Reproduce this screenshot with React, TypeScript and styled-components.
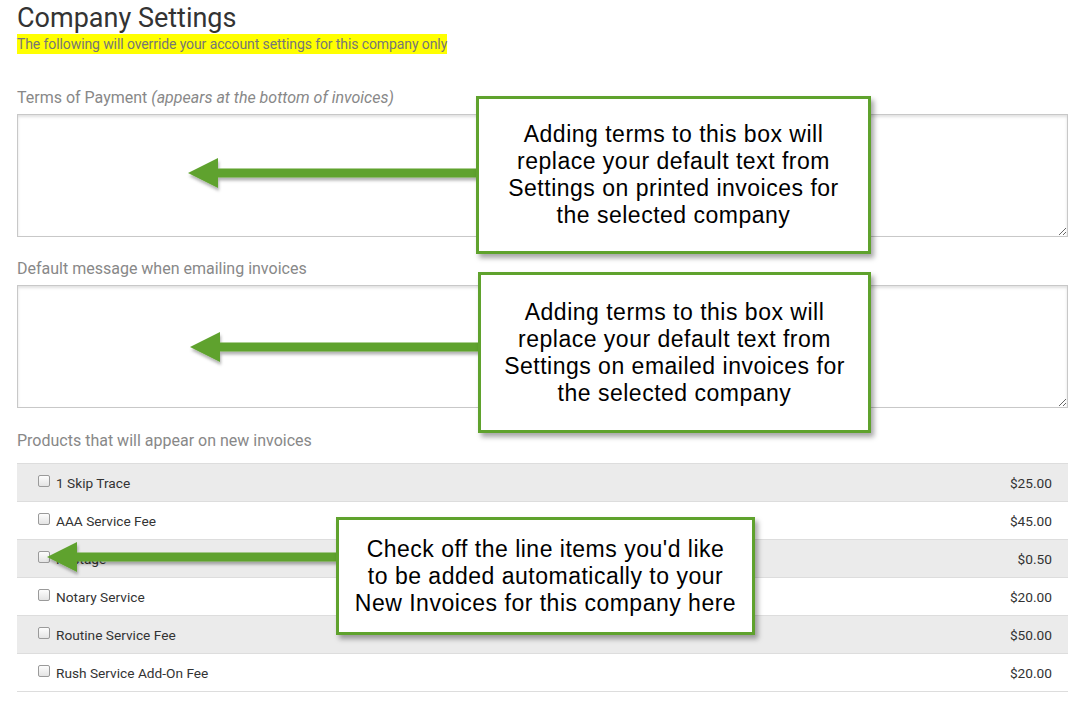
import React from 'react';
import styled, { createGlobalStyle } from 'styled-components';

const GlobalStyle = createGlobalStyle`
  html, body {
    margin: 0;
    padding: 0;
    background: #fff;
  }
  body {
    font-family: Roboto, "Liberation Sans", Arial, sans-serif;
  }
`;

const Page = styled.div`
  position: relative;
  width: 1087px;
  height: 708px;
  overflow: hidden;
  box-sizing: border-box;
  padding: 2px 19px 0 17px;
`;

const Title = styled.h1`
  margin: 0;
  font-size: 27px;
  line-height: 32px;
  font-weight: 400;
  color: #333;
`;

const Highlight = styled.span`
  display: inline-block;
  margin-top: -1px;
  background: #ffff00;
  color: #777;
  font-size: 14px;
  line-height: 20px;
  letter-spacing: -0.1px;
`;

const Field = styled.div<{ $top: number }>`
  margin-top: ${(p) => p.$top}px;
`;

const FieldLabel = styled.div`
  font-size: 16px;
  line-height: 20px;
  color: #888;
  padding-top: 1px;
  margin-bottom: 6px;

  em {
    font-style: italic;
  }
`;

const TextBox = styled.textarea`
  display: block;
  width: 100%;
  height: 123px;
  box-sizing: border-box;
  margin: 0;
  border: 1px solid #c8c8c8;
  border-radius: 0;
  box-shadow: inset 0 2px 3px rgba(0, 0, 0, 0.12);
  background: #fff;
  font-family: inherit;
  resize: vertical;
`;

const ProductTable = styled.div`
  margin-top: 12px;
  border-bottom: 1px solid #ddd;
`;

const ProductRow = styled.label<{ $striped: boolean }>`
  display: flex;
  align-items: center;
  height: 38px;
  box-sizing: border-box;
  border-top: 1px solid #ddd;
  padding: 0 16px 0 21px;
  background: ${(p) => (p.$striped ? '#ebebeb' : '#fff')};
  font-size: 13.7px;
  color: #333;
`;

const Check = styled.input`
  appearance: none;
  width: 12px;
  height: 12px;
  margin: -3px 6px 0 0;
  border: 1px solid #9a9a9a;
  border-radius: 2px;
  background: linear-gradient(#fdfdfd, #e4e4e4);
`;

const ProductName = styled.span`
  flex: 1;
`;

const Price = styled.span`
  color: #333;
`;

const Callout = styled.div<{ $x: number; $y: number; $w: number; $h: number }>`
  position: absolute;
  left: ${(p) => p.$x}px;
  top: ${(p) => p.$y}px;
  width: ${(p) => p.$w}px;
  height: ${(p) => p.$h}px;
  box-sizing: border-box;
  border: 3px solid #5fa22d;
  background: #fff;
  box-shadow: 3px 4px 5px rgba(0, 0, 0, 0.35);
  display: flex;
  align-items: center;
  justify-content: center;
  text-align: center;
  font-family: "Liberation Sans", Arimo, Arial, Helvetica, sans-serif;
  font-size: 23px;
  letter-spacing: 0.5px;
  line-height: 27px;
  color: #000;
  padding: 0 4px;
  white-space: nowrap;
`;

const ArrowSvg = styled.svg<{ $x: number; $y: number }>`
  position: absolute;
  left: ${(p) => p.$x}px;
  top: ${(p) => p.$y}px;
  overflow: visible;
`;

const products = [
  { name: '1 Skip Trace', price: '$25.00' },
  { name: 'AAA Service Fee', price: '$45.00' },
  { name: 'Postage', price: '$0.50' },
  { name: 'Notary Service', price: '$20.00' },
  { name: 'Routine Service Fee', price: '$50.00' },
  { name: 'Rush Service Add-On Fee', price: '$20.00' },
];

const Arrow: React.FC<{ x: number; y: number; length: number }> = ({ x, y, length }) => (
  <ArrowSvg $x={x} $y={y - 16} width={length} height={32}>
    <defs>
      <filter id={`sh${x}${y}`} x="-10%" y="-50%" width="120%" height="200%">
        <feDropShadow dx="1" dy="3" stdDeviation="1.5" floodColor="#000" floodOpacity="0.3" />
      </filter>
    </defs>
    <g filter={`url(#sh${x}${y})`}>
      <rect x={28} y={11.5} width={length - 28} height={9} fill="#5fa22d" />
      <polygon points={`0,16 30,1 30,31`} fill="#5fa22d" />
    </g>
  </ArrowSvg>
);

const App: React.FC = () => {
  return (
    <>
      <GlobalStyle />
      <Page>
        <Title>Company Settings</Title>
        <Highlight>The following will override your account settings for this company only</Highlight>

        <Field $top={33}>
          <FieldLabel>
            Terms of Payment <em>(appears at the bottom of invoices)</em>
          </FieldLabel>
          <TextBox />
        </Field>

        <Field $top={21}>
          <FieldLabel>Default message when emailing invoices</FieldLabel>
          <TextBox />
        </Field>

        <Field $top={22}>
          <FieldLabel>Products that will appear on new invoices</FieldLabel>
          <ProductTable>
            {products.map((p, i) => (
              <ProductRow key={p.name} $striped={i % 2 === 0}>
                <Check type="checkbox" />
                <ProductName>{p.name}</ProductName>
                <Price>{p.price}</Price>
              </ProductRow>
            ))}
          </ProductTable>
        </Field>

        <Arrow x={188} y={173} length={292} />
        <Callout $x={476} $y={96} $w={395} $h={158}>
          Adding terms to this box will
          <br />
          replace your default text from
          <br />
          Settings on printed invoices for
          <br />
          the selected company
        </Callout>

        <Arrow x={190} y={347} length={292} />
        <Callout $x={478} $y={272} $w={393} $h={161}>
          Adding terms to this box will
          <br />
          replace your default text from
          <br />
          Settings on emailed invoices for
          <br />
          the selected company
        </Callout>

        <Arrow x={47} y={557} length={292} />
        <Callout $x={336} $y={517} $w={419} $h={118}>
          Check off the line items you'd like
          <br />
          to be added automatically to your
          <br />
          New Invoices for this company here
        </Callout>
      </Page>
    </>
  );
};

export default App;
